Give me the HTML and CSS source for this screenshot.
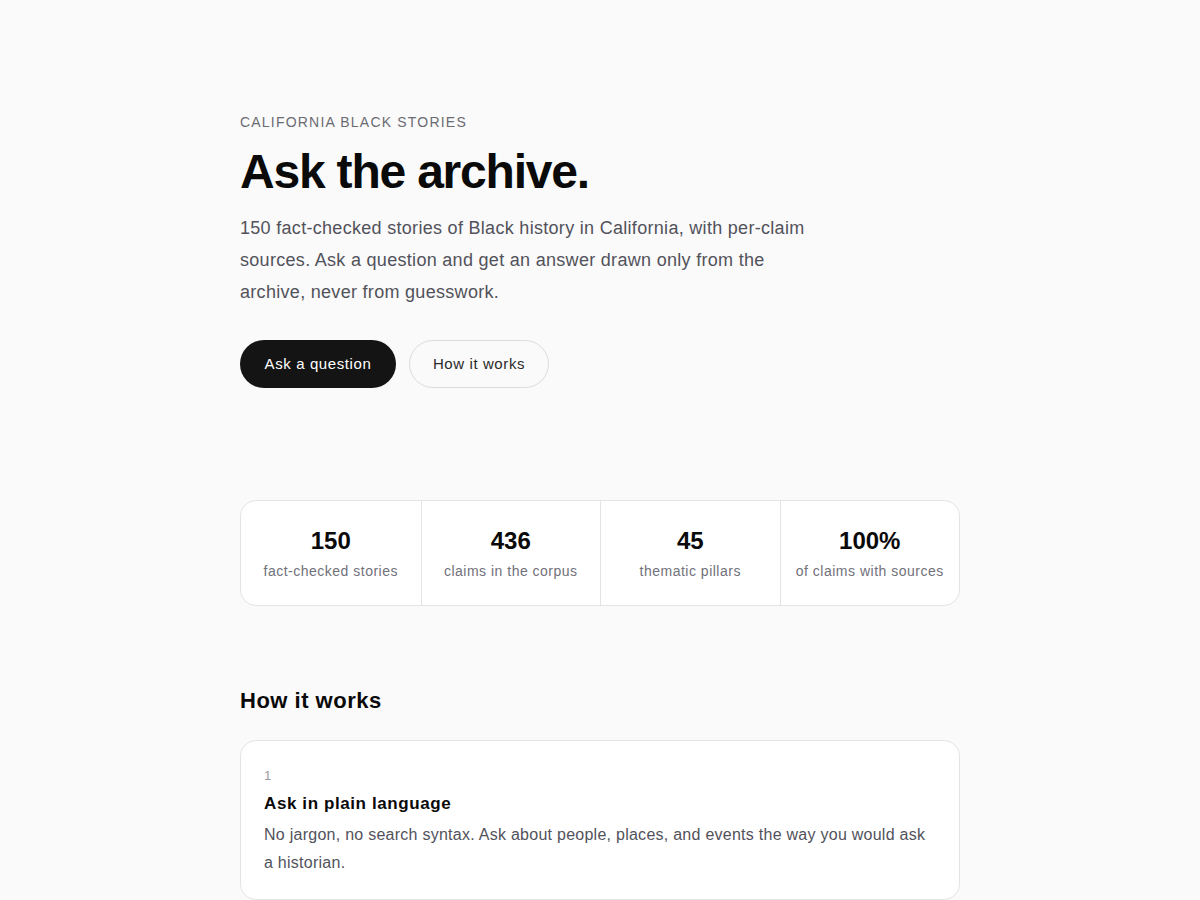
FILE: index.html
```html
<!DOCTYPE html>
<html lang="en">

<head>
    <meta charset="UTF-8">
    <meta name="viewport" content="width=device-width, initial-scale=1.0">
    <title>Ask the archive</title>
    <link rel="stylesheet" href="styles.css">
</head>

<body>
    <div class="page">
        <section class="hero">
            <p class="eyebrow">California Black Stories</p>
            <h1>Ask the archive.</h1>
            <p class="lead">150 fact-checked stories of Black history in California, with per-claim sources. Ask a question and get an answer drawn only from the archive, never from guesswork.</p>
            <div class="actions">
                <a class="btn btn-dark" href="#">Ask a question</a>
                <a class="btn btn-light" href="#how">How it works</a>
            </div>
        </section>

        <ul class="stats">
            <li>
                <strong>150</strong>
                <span>fact-checked stories</span>
            </li>
            <li>
                <strong>436</strong>
                <span>claims in the corpus</span>
            </li>
            <li>
                <strong>45</strong>
                <span>thematic pillars</span>
            </li>
            <li>
                <strong>100%</strong>
                <span>of claims with sources</span>
            </li>
        </ul>

        <section class="how" id="how">
            <h2>How it works</h2>
            <div class="step">
                <div class="step-num">1</div>
                <h3>Ask in plain language</h3>
                <p>No jargon, no search syntax. Ask about people, places, and events the way you would ask a historian.</p>
            </div>
        </section>
    </div>
</body>

</html>
```

FILE: styles.css
```css
* {
    margin: 0;
    padding: 0;
    box-sizing: border-box;
}

li {
    list-style: none;
}

body {
    background-color: #fafafa;
    color: #0a0a0a;
    font-family: "Liberation Sans", Arial, sans-serif;
}

.page {
    width: 720px;
    margin: 0 auto;
    padding-top: 113px;
}

.eyebrow {
    font-size: 14px;
    line-height: 18px;
    letter-spacing: 1.2px;
    text-transform: uppercase;
    color: #6b6b72;
}

h1 {
    margin-top: 11px;
    font-size: 48px;
    line-height: 60px;
    font-weight: 700;
    letter-spacing: -1.2px;
}

.lead {
    margin-top: 10px;
    max-width: 580px;
    font-size: 18px;
    line-height: 32px;
    letter-spacing: 0.3px;
    color: #52525a;
}

.actions {
    display: flex;
    gap: 13px;
    margin-top: 32px;
}

.btn {
    display: inline-block;
    height: 48px;
    line-height: 46px;
    border-radius: 24px;
    font-size: 15px;
    letter-spacing: 0.6px;
    text-align: center;
    text-decoration: none;
    border: 1px solid transparent;
}

.btn-dark {
    background-color: #141414;
    color: #fff;
    width: 156px;
}

.btn-light {
    color: #2a2a2a;
    border-color: #dcdcdc;
    width: 140px;
}

.stats {
    display: grid;
    grid-template-columns: repeat(4, 1fr);
    margin-top: 112px;
    background-color: #fff;
    border: 1px solid #e4e4e7;
    border-radius: 16px;
}

.stats li {
    height: 104px;
    padding-top: 25px;
    text-align: center;
    border-left: 1px solid #e4e4e7;
}

.stats li:first-child {
    border-left: none;
}

.stats strong {
    display: block;
    font-size: 24px;
    line-height: 30px;
    font-weight: 600;
}

.stats span {
    display: block;
    margin-top: 6px;
    font-size: 14px;
    line-height: 18px;
    letter-spacing: 0.5px;
    color: #71717a;
}

.how {
    margin-top: 80px;
}

h2 {
    font-size: 22px;
    line-height: 30px;
    font-weight: 600;
    letter-spacing: 0.5px;
}

.step {
    margin-top: 24px;
    padding: 25px 23px 22px;
    background-color: #fff;
    border: 1px solid #e4e4e7;
    border-radius: 16px;
}

.step-num {
    font-size: 13px;
    line-height: 20px;
    color: #9a9aa0;
}

.step h3 {
    margin-top: 5px;
    font-size: 17px;
    line-height: 26px;
    font-weight: 600;
    letter-spacing: 0.6px;
}

.step p {
    margin-top: 4px;
    font-size: 16px;
    line-height: 28px;
    letter-spacing: 0.26px;
    color: #52525b;
}
```
